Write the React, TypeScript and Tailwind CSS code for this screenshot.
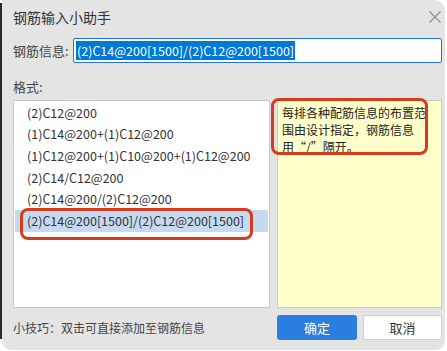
import React from "react";

const items = [
  "(2)C12@200",
  "(1)C14@200+(1)C12@200",
  "(1)C12@200+(1)C10@200+(1)C12@200",
  "(2)C14/C12@200",
  "(2)C14@200/(2)C12@200",
  "(2)C14@200[1500]/(2)C12@200[1500]",
];

export default function App() {
  const font = { fontFamily: '"Noto Sans CJK SC", "Noto Sans", sans-serif' };
  return (
    <div className="w-[447px] h-[351px] bg-white flex items-start text-[#333]" style={font}>
      <div className="w-[2px] h-[336px] mt-[3px] bg-[#2b2b2b] shrink-0" />
      <div className="relative w-[443px] h-[350px] bg-[#e4e4e4] rounded-tr-[10px] rounded-b-[9px] flex flex-col pl-[11px] pr-[3px]">
        {/* title */}
        <div className="h-[34px] flex items-center justify-between">
          <span className="text-[14px] leading-none text-[#333]">钢筋输入小助手</span>
          <svg width="12" height="12" viewBox="0 0 12 12" className="mr-[1px]">
            <path d="M0.5 0.5 L11.5 11.5 M11.5 0.5 L0.5 11.5" stroke="#8a8a8a" strokeWidth="1.1" />
          </svg>
        </div>
        {/* input row */}
        <div className="mt-[4px] h-[25px] flex items-center">
          <span className="w-[60px] text-[13px] leading-none text-[#444]">钢筋信息:</span>
          <div className="flex-1 h-[25px] border border-[#1f74d8] rounded-[2px] bg-white flex items-center pl-[2px]">
            <span className="bg-[#0078d7] text-white text-[12.5px] leading-[19px] px-[1px]">
              (2)C14@200[1500]/(2)C12@200[1500]
            </span>
          </div>
        </div>
        {/* format label */}
        <div className="mt-[14px] h-[18px] flex items-center text-[13px] leading-none text-[#444]">格式:</div>
        {/* panels */}
        <div className="mt-[5px] h-[208px] flex gap-[7px]">
          <div className="w-[257px] h-full bg-white border border-[#c9c9c9] pt-[1px] px-[1px]">
            {items.map((t, i) => (
              <div
                key={i}
                className={
                  "h-[21.7px] flex items-center pl-[12px] text-[12.5px] leading-none text-[#333] " +
                  (i === 5 ? "bg-[#c5daf0]" : "")
                }
              >
                {t}
              </div>
            ))}
          </div>
          <div className="flex-1 h-full bg-[#ffffcb] border border-[#c9c9c9] pl-[4px] pt-[3px]">
            <p className="text-[12px] leading-[17px] text-[#222] w-[148px]">
              每排各种配筋信息的布置范围由设计指定，钢筋信息用“/”隔开。
            </p>
          </div>
        </div>
        {/* bottom */}
        <div className="mt-[7px] h-[25px] flex items-center">
          <span className="flex-1 text-[12px] leading-none text-[#444]">小技巧：双击可直接添加至钢筋信息</span>
          <div className="flex gap-[6px]">
            <button className="w-[80px] h-[25px] bg-[#2a7ee0] rounded-[3px] text-white text-[13px] leading-none">
              确定
            </button>
            <button className="w-[79px] h-[25px] bg-white border border-[#cfcfcf] rounded-[3px] text-[#333] text-[13px] leading-none">
              取消
            </button>
          </div>
        </div>
        {/* annotation boxes */}
        <div className="absolute left-[18px] top-[208px] w-[233px] h-[32px] border-[3px] border-[#d63b1c] rounded-[8px] pointer-events-none" />
        <div className="absolute left-[269px] top-[98px] w-[157px] h-[57px] border-[3px] border-[#d63b1c] rounded-[8px] pointer-events-none" />
      </div>
    </div>
  );
}
